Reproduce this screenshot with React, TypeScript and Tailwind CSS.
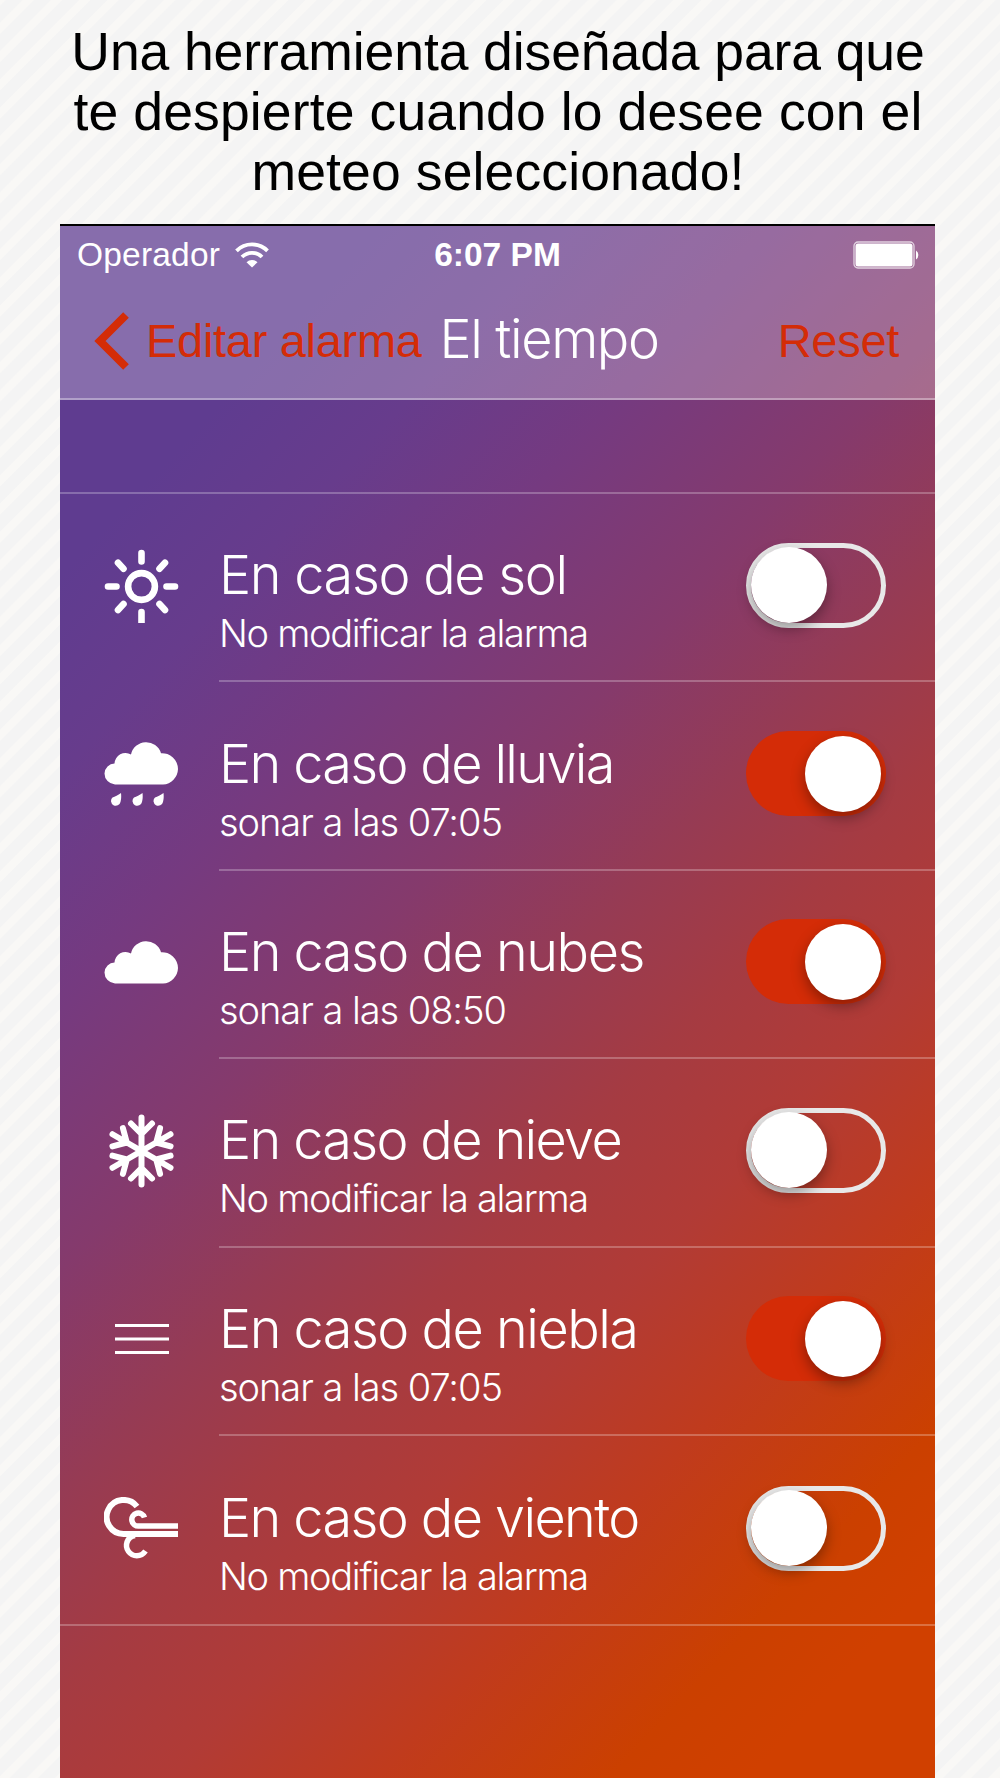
import type { ReactNode } from "react";

const THIN = "font-['Inter','Liberation_Sans',sans-serif] font-light";

function SunIcon() {
  return (
    <svg width="75" height="74" viewBox="0 0 75 74" stroke="#fff" strokeWidth="6.6" strokeLinecap="round" fill="none">
      <circle cx="37.5" cy="37.5" r="13.4" />
      <path d="M37.5 4v8.500M37.500 63v12M4 37.500h8.500M62.500 37.500H71M14 13.800l5.500 6M61 13.800l-5.500 6M14 61l5.500-6M61 61l-5.500-6" />
    </svg>
  );
}

const CLOUD = "M11 43.500A11 11 0 0 1 0.500 32.500A10.500 10.500 0 0 1 10.500 22.500A11 11 0 0 1 27 13.500A15.500 15.500 0 0 1 57 12.200A16 16 0 0 1 74 28A16 16 0 0 1 59 43.500Z";

function RainIcon() {
  return (
    <svg width="75" height="66" viewBox="0 0 75 66" fill="#fff">
      <path d={CLOUD} />
      <path d="M17 52C17.500 56 17 59 16.500 61A4.800 4.800 0 1 1 8.500 56.500C11 55.500 14 54 17 52ZM38.500 52C39 56 38.500 59 38 61A4.800 4.800 0 1 1 30 56.500C32.500 55.500 35.500 54 38.500 52ZM59.500 52C60 56 59.500 59 59 61A4.800 4.800 0 1 1 51 56.500C53.500 55.500 56.500 54 59.500 52Z" />
    </svg>
  );
}

function CloudIcon() {
  return (
    <svg width="75" height="44" viewBox="0 0 75 44" fill="#fff">
      <path d={CLOUD} />
    </svg>
  );
}

function SnowIcon() {
  return (
    <svg width="75" height="74" viewBox="0 0 75 74" stroke="#fff" strokeWidth="6" strokeLinecap="round" fill="none">
      {[0, 60, 120, 180, 240, 300].map((deg) => (
        <path key={deg} transform={`rotate(${deg} 37.500 37)`} d="M37.500 37V3.500M37.500 20L27 9.500M37.500 20L48 9.500" />
      ))}
    </svg>
  );
}

function FogIcon() {
  return (
    <svg width="75" height="32" viewBox="0 0 75 32" stroke="#fff" strokeWidth="3" fill="none">
      <path d="M11 2.500h54M11 16h54M11 29.500h54" />
    </svg>
  );
}

function WindIcon() {
  return (
    <svg width="75" height="62" viewBox="0 0 75 62" stroke="#fff" fill="none">
      <path strokeWidth="6" d="M33 9.500A17 17 0 1 0 19.500 37H74" />
      <path strokeWidth="5.500" d="M40.500 20.500A6.500 6.500 0 1 0 35 29H74" />
      <path strokeWidth="5.500" d="M31 38.500C22.500 40 20.500 49 24.500 54.500C28.500 60 37 60.500 41.500 54" />
    </svg>
  );
}

function WifiIcon() {
  return (
    <svg width="34" height="26" viewBox="0 0 34 26" stroke="#fff" fill="none">
      <path strokeWidth="3.800" d="M1.500 8.800a22 22 0 0 1 31 0" />
      <path strokeWidth="3.800" d="M7 15a14 14 0 0 1 20 0" />
      <path fill="#fff" stroke="none" d="M11.500 20.200a7.800 7.800 0 0 1 11 0L17 25.500Z" />
    </svg>
  );
}

function BatteryIcon() {
  return (
    <svg width="68" height="28" viewBox="0 0 68 28">
      <rect x="1" y="1" width="60" height="26" rx="4" fill="none" stroke="#fff" strokeOpacity=".7" strokeWidth="1.300" />
      <rect x="2.500" y="2.500" width="57" height="23" rx="2.500" fill="#fff" />
      <path d="M63 9.500a5.500 5.500 0 0 1 0 9Z" fill="#fff" />
    </svg>
  );
}

function Toggle({ on }: { on: boolean }) {
  return (
    <div
      role="switch"
      aria-checked={on}
      className={`flex h-[85px] w-[140px] shrink-0 items-center rounded-full ${
        on ? "justify-end bg-[#d42c07] pr-[5px]" : "border-[5px] border-[#e8e8e8]"
      }`}
    >
      <span className="size-[76px] rounded-full bg-white shadow-[0_6px_14px_rgba(0,0,0,0.35)]" />
    </div>
  );
}

type Row = { title: string; detail: string; on: boolean; icon: ReactNode; tracking: string };

const ROWS: Row[] = [
  { title: "En caso de sol", detail: "No modificar la alarma", on: false, icon: <SunIcon />, tracking: "tracking-[-1.3px]" },
  { title: "En caso de lluvia", detail: "sonar a las 07:05", on: true, icon: <RainIcon />, tracking: "tracking-[-1.65px]" },
  { title: "En caso de nubes", detail: "sonar a las 08:50", on: true, icon: <CloudIcon />, tracking: "tracking-[-1.5px]" },
  { title: "En caso de nieve", detail: "No modificar la alarma", on: false, icon: <SnowIcon />, tracking: "tracking-[-1.65px]" },
  { title: "En caso de niebla", detail: "sonar a las 07:05", on: true, icon: <FogIcon />, tracking: "tracking-[-1.5px]" },
  { title: "En caso de viento", detail: "No modificar la alarma", on: false, icon: <WindIcon />, tracking: "tracking-[-1.6px]" },
];

function WeatherRow({ row, last }: { row: Row; last: boolean }) {
  return (
    <li className="flex h-[188.4px]">
      <div className="flex w-[159px] shrink-0 items-center justify-center pb-[5px] pl-[4px]">{row.icon}</div>
      <div
        className={`flex flex-1 items-center justify-between pr-[49px] pb-[4px] ${last ? "" : "border-b-2 border-white/25"}`}
      >
        <div className={`pt-[32px] whitespace-nowrap text-white ${THIN}`}>
          <h2 className={`text-[54px] leading-[64px] ${row.tracking}`}>{row.title}</h2>
          <p className={`text-[38px] leading-[52px] ${row.on ? "tracking-[-1.05px]" : "tracking-[-1.3px]"}`}>{row.detail}</p>
        </div>
        <Toggle on={row.on} />
      </div>
    </li>
  );
}

export default function App() {
  return (
    <main className="flex h-[1778px] w-[1000px] flex-col overflow-hidden bg-[repeating-linear-gradient(135deg,#f9f8f6_0_3.5px,#f4f4f4_4.5px_15.5px,#f9f8f6_16.5px_20px)] font-['Liberation_Sans',Arial,sans-serif]">
      <h1 className="h-[224px] shrink-0 pt-[22px] pr-[4px] text-center text-[53.5px] leading-[60px] tracking-[0.12px] text-black">
        <span className="tracking-[-0.1px]">Una herramienta diseñada para que</span>
        <br />
        te despierte cuando lo desee con el
        <br />
        meteo seleccionado!
      </h1>

      <section className="ml-[60px] w-[875px] flex-1 border-t-2 border-black bg-[linear-gradient(133deg,#5f3c90_0%,#5f3c90_14%,#673c8c_22%,#753a80_31%,#853a6c_42%,#963b54_51%,#a53b42_59%,#b13b36_67%,#c03b1d_76%,#cb4000_86%,#d04000_92%)]">
        <header className="h-[174px] border-b-2 border-white/35 bg-white/25">
          <div className="grid h-[58px] grid-cols-3 items-center pr-[14px] pl-[17px] text-white">
            <div className="flex items-center gap-[15px] text-[33.5px] tracking-[0.2px]">
              Operador
              <WifiIcon />
            </div>
            <time className="pr-[3px] text-center text-[33.5px] font-bold">6:07 PM</time>
            <div className="flex justify-end">
              <BatteryIcon />
            </div>
          </div>
          <nav className="flex h-[114px] items-center pr-[36px] pl-[34px] text-[47px] tracking-[-0.3px] text-[#d42c07]">
            <svg width="36" height="58" viewBox="0 0 36 58" fill="none" stroke="currentColor" strokeWidth="8">
              <path d="M32 3L6 29L32 55" />
            </svg>
            <a className="ml-[16px] whitespace-nowrap">Editar alarma</a>
            <span className={`ml-[18px] pb-[5px] whitespace-nowrap text-[54px] tracking-[-1.4px] text-white ${THIN}`}>El tiempo</span>
            <a className="ml-auto">Reset</a>
          </nav>
        </header>

        <ul className="mt-[92px] border-y-2 border-white/25">
          {ROWS.map((row, i) => (
            <WeatherRow key={row.title} row={row} last={i === ROWS.length - 1} />
          ))}
        </ul>
      </section>
    </main>
  );
}
